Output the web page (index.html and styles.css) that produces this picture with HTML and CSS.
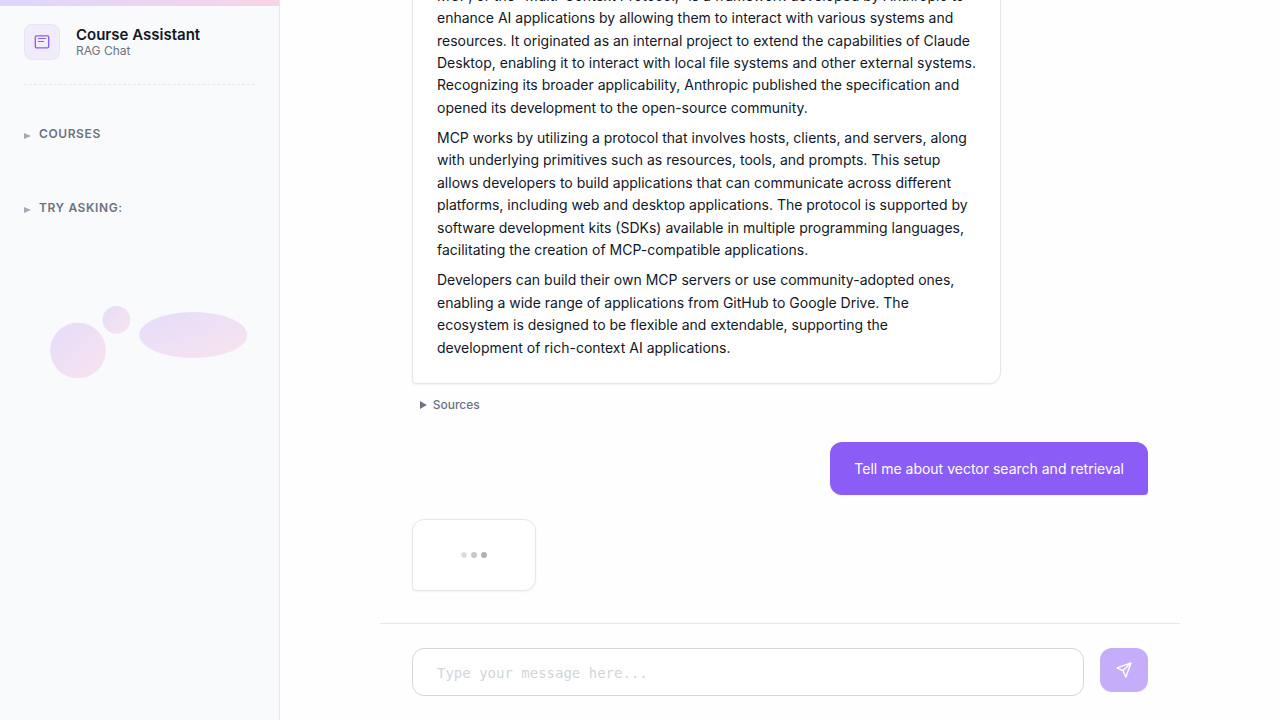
FILE: index.html
```html
<!DOCTYPE html>
<html lang="en">
<head>
<meta charset="utf-8">
<meta name="viewport" content="width=device-width, initial-scale=1">
<title>Course Assistant</title>
<link rel="stylesheet" href="styles.css">
</head>
<body>
<div class="app">
  <aside class="sidebar">
    <div class="stripe"></div>
    <div class="sidebar-body">
      <header class="brand">
        <div class="brand-icon">
          <svg width="16" height="16" viewBox="0 0 16 16" fill="none" aria-hidden="true">
            <rect x="1.3" y="1.8" width="13.4" height="12" rx="1.3" stroke="#8b5cf6" stroke-width="1.3"/>
            <path d="M4.500 4.500h7M4.500 7.500h5" stroke="#8b5cf6" stroke-width="1.2" stroke-linecap="round"/>
          </svg>
        </div>
        <div class="brand-text">
          <h1 class="brand-title">Course Assistant</h1>
          <p class="brand-sub">RAG Chat</p>
        </div>
      </header>
      <details class="section">
        <summary class="section-title">Courses</summary>
      </details>
      <details class="section">
        <summary class="section-title">Try asking:</summary>
      </details>
      <svg class="blobs" viewBox="0 0 231 100" aria-hidden="true">
        <defs>
          <linearGradient id="blob" x1="0" y1="0" x2="1" y2="1">
            <stop offset="0" stop-color="#e4ddfb"/>
            <stop offset="1" stop-color="#f9e3ee"/>
          </linearGradient>
        </defs>
        <circle cx="54" cy="64.500" r="27.800" fill="url(#blob)"/>
        <circle cx="92.400" cy="33.800" r="13.900" fill="url(#blob)"/>
        <ellipse cx="169.300" cy="49" rx="54" ry="23" fill="url(#blob)"/>
      </svg>
    </div>
  </aside>

  <main class="chat">
    <div class="messages">
      <div class="message">
        <div class="bubble answer">
          <p>MCP, or the "Multi-Context Protocol," is a framework developed by Anthropic to enhance AI applications by allowing them to interact with various systems and resources. It originated as an internal project to extend the capabilities of Claude Desktop, enabling it to interact with local file systems and other external systems. Recognizing its broader applicability, Anthropic published the specification and opened its development to the open-source community.</p>
          <p>MCP works by utilizing a protocol that involves hosts, clients, and servers, along with underlying primitives such as resources, tools, and prompts. This setup allows developers to build applications that can communicate across different platforms, including web and desktop applications. The protocol is supported by software development kits (SDKs) available in multiple programming languages, facilitating the creation of MCP-compatible applications.</p>
          <p>Developers can build their own MCP servers or use community-adopted ones, enabling a wide range of applications from GitHub to Google Drive. The ecosystem is designed to be flexible and extendable, supporting the development of rich-context AI applications.</p>
        </div>
        <details class="sources">
          <summary>Sources</summary>
        </details>
      </div>
      <div class="message user">
        <div class="bubble question">Tell me about vector search and retrieval</div>
      </div>
      <div class="message">
        <div class="bubble typing" role="status" aria-label="Typing">
          <span class="dot dot-low"></span>
          <span class="dot dot-mid"></span>
          <span class="dot dot-high"></span>
        </div>
      </div>
    </div>
    <form class="composer">
      <textarea class="composer-input" rows="1" aria-label="Message" placeholder="Type your message here..."></textarea>
      <button class="send" type="button" aria-label="Send message" disabled>
        <svg width="18" height="18" viewBox="0 0 18 18" fill="none" stroke="#ffffff" stroke-width="1.4" stroke-linejoin="round" stroke-linecap="round" aria-hidden="true">
          <path d="M16 1.900 2 6.800 8 9.600 10.900 16ZM8 9.600 16 1.900"/>
        </svg>
      </button>
    </form>
  </main>
</div>
</body>
</html>
```

FILE: styles.css
```css
* {
  box-sizing: border-box;
}

body {
  margin: 0;
  background: #fefefe;
  color: #111827;
  font-family: Inter, "Liberation Sans", sans-serif;
  font-size: 14px;
}

h1,
p {
  margin: 0;
}

.app {
  display: flex;
  height: 100vh;
}

.sidebar {
  flex: 0 0 280px;
  background: #f9fafc;
  border-right: 1px solid #e5e7eb;
}

.stripe {
  height: 6px;
  background: linear-gradient(90deg, #ddd6fe, #f9d5e7);
}

.sidebar-body {
  display: flex;
  flex-direction: column;
  padding: 18px 24px 24px;
}

.brand {
  display: flex;
  gap: 16px;
  padding-bottom: 24px;
  border-bottom: 1px dashed #e5e7eb;
  margin-bottom: 40px;
}

.brand-icon {
  display: grid;
  place-items: center;
  width: 36px;
  height: 36px;
  border: 1px solid #e5e7eb;
  border-radius: 8px;
  background: #f0ecfb;
}

.brand-title {
  font-size: 15px;
  font-weight: 600;
  line-height: 22px;
}

.brand-sub {
  color: #6b7280;
  font-size: 12px;
  line-height: 10px;
}

.section {
  margin-bottom: 56px;
}

.section-title {
  display: flex;
  align-items: center;
  gap: 8px;
  color: #6b7280;
  font-size: 12px;
  font-weight: 600;
  line-height: 18px;
  letter-spacing: 0.6px;
  text-transform: uppercase;
  cursor: pointer;
}

.section-title::before {
  content: "";
  margin-top: 4px;
  border-left: 7px solid #a3a9b5;
  border-top: 3px solid transparent;
  border-bottom: 3px solid transparent;
}

.blobs {
  width: 100%;
  margin-top: 13px;
}

.chat {
  display: flex;
  flex: 1;
  flex-direction: column;
  min-width: 0;
  max-width: 800px;
  margin: 0 auto;
}

.messages {
  display: flex;
  flex: 1;
  flex-direction: column;
  justify-content: flex-end;
  gap: 24px;
  min-height: 0;
  padding: 32px;
  overflow: hidden;
}

.message {
  display: flex;
  flex: none;
  flex-direction: column;
  align-items: flex-start;
  max-width: 80%;
}

.user {
  align-self: flex-end;
}

.bubble {
  border-radius: 12px 12px 12px 4px;
  background: #ffffff;
  box-shadow: 0 1px 2px rgba(0, 0, 0, 0.05);
}

.answer {
  padding: 16px 22px 16px 24px;
  border: 1px solid #e5e7eb;
  line-height: 1.6;
}

.answer p {
  margin-bottom: 8px;
}

.question {
  padding: 16px 24px;
  border-radius: 12px 12px 4px 12px;
  background: #8b5cf6;
  color: #ffffff;
  line-height: 21px;
}

.sources {
  padding: 12px 8px 4px;
  color: #6b7280;
  font-size: 12px;
  font-weight: 500;
  line-height: 18px;
}

.sources summary {
  cursor: pointer;
}

.typing {
  display: flex;
  align-items: center;
  justify-content: center;
  gap: 4px;
  padding: 32px 48px;
  border: 1px solid #e5e7eb;
}

.dot {
  width: 6px;
  height: 6px;
  border-radius: 50%;
  background: #9ca3af;
}

.dot-low {
  opacity: 0.4;
  transform: scale(0.9);
}

.dot-mid {
  opacity: 0.6;
}

.dot-high {
  opacity: 0.85;
}

.composer {
  display: flex;
  align-items: flex-start;
  gap: 16px;
  padding: 24px 32px;
  border-top: 1px solid #e5e7eb;
}

.composer-input {
  flex: 1;
  height: 48px;
  padding: 13px 24px;
  border: 1px solid #d1d5db;
  border-radius: 12px;
  background: #ffffff;
  font-family: "DejaVu Sans Mono", monospace;
  font-size: 14px;
  line-height: 22px;
  resize: none;
  overflow: hidden;
}

.composer-input::placeholder {
  color: #d1d5db;
}

.send {
  display: grid;
  place-items: center;
  width: 48px;
  height: 44px;
  padding: 0;
  border: 0;
  border-radius: 12px;
  background: #c5adfa;
}
```
